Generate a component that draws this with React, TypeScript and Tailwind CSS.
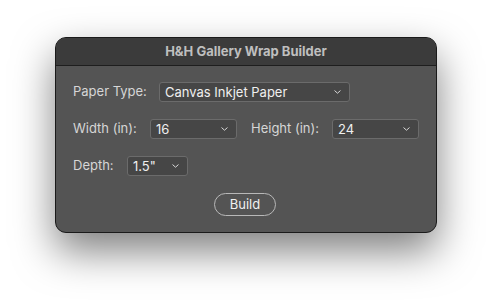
import React from "react";

function Chevron() {
  return (
    <svg width="7" height="4" viewBox="0 0 7 4" className="shrink-0">
      <path d="M0.8 0.8 L3.5 3.2 L6.2 0.8" fill="none" stroke="#d8d8d8" strokeWidth="1" strokeLinecap="round" strokeLinejoin="round" />
    </svg>
  );
}

function Select({ value, w }: { value: string; w: string }) {
  return (
    <div className={`${w} h-5 flex items-center justify-between pl-[5px] pr-[8px] bg-[#464646] border border-[#6b6b6b] rounded-[3px] text-[#efefef] text-[13px] leading-none`}>
      <span>{value}</span>
      <Chevron />
    </div>
  );
}

export default function App() {
  return (
    <div className="w-[492px] h-[306px] bg-white pl-[55px] pt-[37px]" style={{ fontFamily: 'Inter, "Liberation Sans", sans-serif' }}>
      <div className="w-[382px] h-[196px] rounded-[11px] border border-[#1a1a1a] bg-[#545454] overflow-hidden shadow-[0_18px_40px_rgba(0,0,0,0.5)] flex flex-col">
        <div className="h-[28px] shrink-0 bg-[#3b3b3b] border-b border-[#1e1e1e] flex items-center justify-center text-[13px] font-bold text-[#bfbfbf]">
          H&amp;H Gallery Wrap Builder
        </div>
        <div className="flex flex-col gap-[17px] pl-[17px] pt-[16px] text-[13px] text-[#d6d6d6]">
          <div className="flex items-center">
            <div className="w-[86px]">Paper Type:</div>
            <Select value="Canvas Inkjet Paper" w="w-[191px]" />
          </div>
          <div className="flex items-center">
            <div className="w-[77px]">Width (in):</div>
            <Select value="16" w="w-[87px]" />
            <div className="w-[81px] ml-[14px]">Height (in):</div>
            <Select value="24" w="w-[87px]" />
          </div>
          <div className="flex items-center">
            <div className="w-[54px]">Depth:</div>
            <Select value={'1.5"'} w="w-[61px]" />
          </div>
          <div className="flex justify-center pr-[17px]">
            <div className="ml-[-2px] w-[62px] h-[23px] rounded-full border-[1.5px] border-[#b8b8b8] flex items-center justify-center text-[#f0f0f0] text-[13px]">
              Build
            </div>
          </div>
        </div>
      </div>
    </div>
  );
}
